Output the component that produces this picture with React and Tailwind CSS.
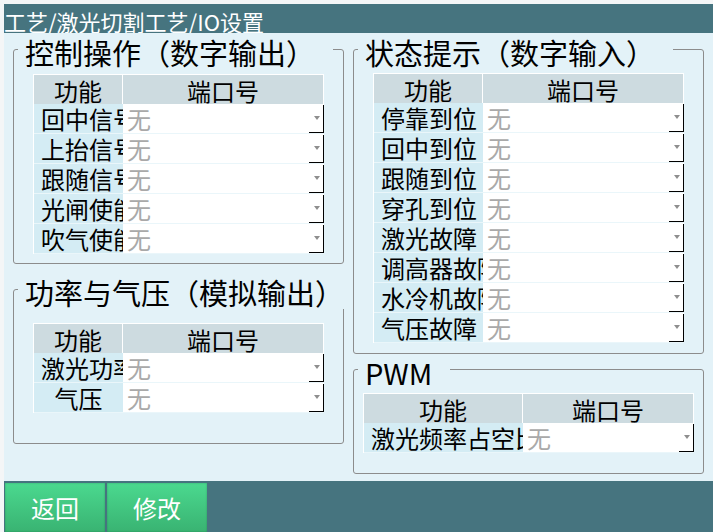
import React from "react";

const outputs = ["回中信号", "上抬信号", "跟随信号", "光闸使能", "吹气使能"];
const analog = ["激光功率", "气压"];
const inputs = ["停靠到位", "回中到位", "跟随到位", "穿孔到位", "激光故障", "调高器故障", "水冷机故障", "气压故障"];
const pwm = ["激光频率占空比"];

const PortTable = ({ cols, rows }) => (
    <div className="border-l border-t border-white">
        {/* header */}
        <div className={`grid ${cols} h-[29px] bg-[#cddbe0]`}>
            <div className="text-center pt-[2px] leading-[27px] border-r border-white">功能</div>
            <div className="text-center pt-[2px] leading-[27px] border-r border-white">端口号</div>
        </div>
        {rows.map((name) => (
            <div key={name} className={`grid ${cols} h-[30px] border-b border-[#eaf6fa]`}>
                <div className="bg-[#d4ecf4] overflow-hidden whitespace-nowrap text-center px-[7px] leading-[29px]">
                    {name}
                </div>
                <div className="relative bg-white text-[#a9a9a9] pl-[4px] leading-[29px]">
                    无
                    <span className="absolute right-0 top-[1px] bottom-0 w-[15px] border-r border-b border-black">
                        <span className="absolute right-[3px] top-[11px] w-0 h-0 border-l-[3px] border-r-[3px] border-t-[4px] border-l-transparent border-r-transparent border-t-[#8e8e8e]"></span>
                    </span>
                </div>
            </div>
        ))}
    </div>
);

const Group = ({ title, className, children }) => (
    <div className={`relative border border-[#8c8c8c] rounded-[3px] ${className}`}>
        <span className="absolute left-[4px] -top-[15px] pl-[7px] pr-[18px] bg-[#e3f2f8] text-[29px] leading-[34px] whitespace-nowrap">
            {title}
        </span>
        {children}
    </div>
);

export default function App() {
    return (
        <div className="w-[713px] h-[532px] overflow-hidden bg-[#f4f6f7] pt-1 pl-1 flex flex-col font-['Noto_Sans_CJK_SC','Noto_Sans',sans-serif] text-[24px] text-black">
            {/* title bar */}
            <div className="h-[29px] bg-[#46747f] text-white text-[22px] leading-[23px] pt-[6px] whitespace-nowrap">
                工艺/激光切割工艺/IO设置
            </div>

            {/* content */}
            <div className="flex-1 flex bg-[#e3f2f8]">
                <div className="ml-[9px] w-[331px] flex flex-col">
                    <Group title="控制操作（数字输出）" className="mt-[16px] h-[215px]">
                        <div className="ml-[19px] mt-[24px] w-[291px]">
                            <PortTable cols="grid-cols-[89px_201px]" rows={outputs} />
                        </div>
                    </Group>
                    <Group title="功率与气压（模拟输出）" className="mt-[25px] h-[155px]">
                        <div className="ml-[19px] mt-[33px] w-[291px]">
                            <PortTable cols="grid-cols-[89px_201px]" rows={analog} />
                        </div>
                    </Group>
                </div>
                <div className="ml-[9px] w-[351px] flex flex-col">
                    <Group title="状态提示（数字输入）" className="mt-[16px] h-[305px]">
                        <div className="ml-[19px] mt-[23px] w-[311px]">
                            <PortTable cols="grid-cols-[109px_201px]" rows={inputs} />
                        </div>
                    </Group>
                    <Group title="PWM" className="mt-[15px] h-[105px]">
                        <div className="ml-[9px] mt-[23px] w-[331px]">
                            <PortTable cols="grid-cols-[159px_171px]" rows={pwm} />
                        </div>
                    </Group>
                </div>
            </div>

            {/* bottom bar */}
            <div className="h-[51px] bg-[#46747f] pt-[2px] pl-[1px] flex gap-[2px]">
                <button className="w-[100px] h-[49px] bg-linear-to-b from-[#4bd98f] to-[#39b372] text-white text-[24px] shadow-[inset_0_0_2px_rgba(0,60,40,0.35)]">
                    返回
                </button>
                <button className="w-[100px] h-[49px] bg-linear-to-b from-[#4bd98f] to-[#39b372] text-white text-[24px] shadow-[inset_0_0_2px_rgba(0,60,40,0.35)]">
                    修改
                </button>
            </div>
        </div>
    );
}
